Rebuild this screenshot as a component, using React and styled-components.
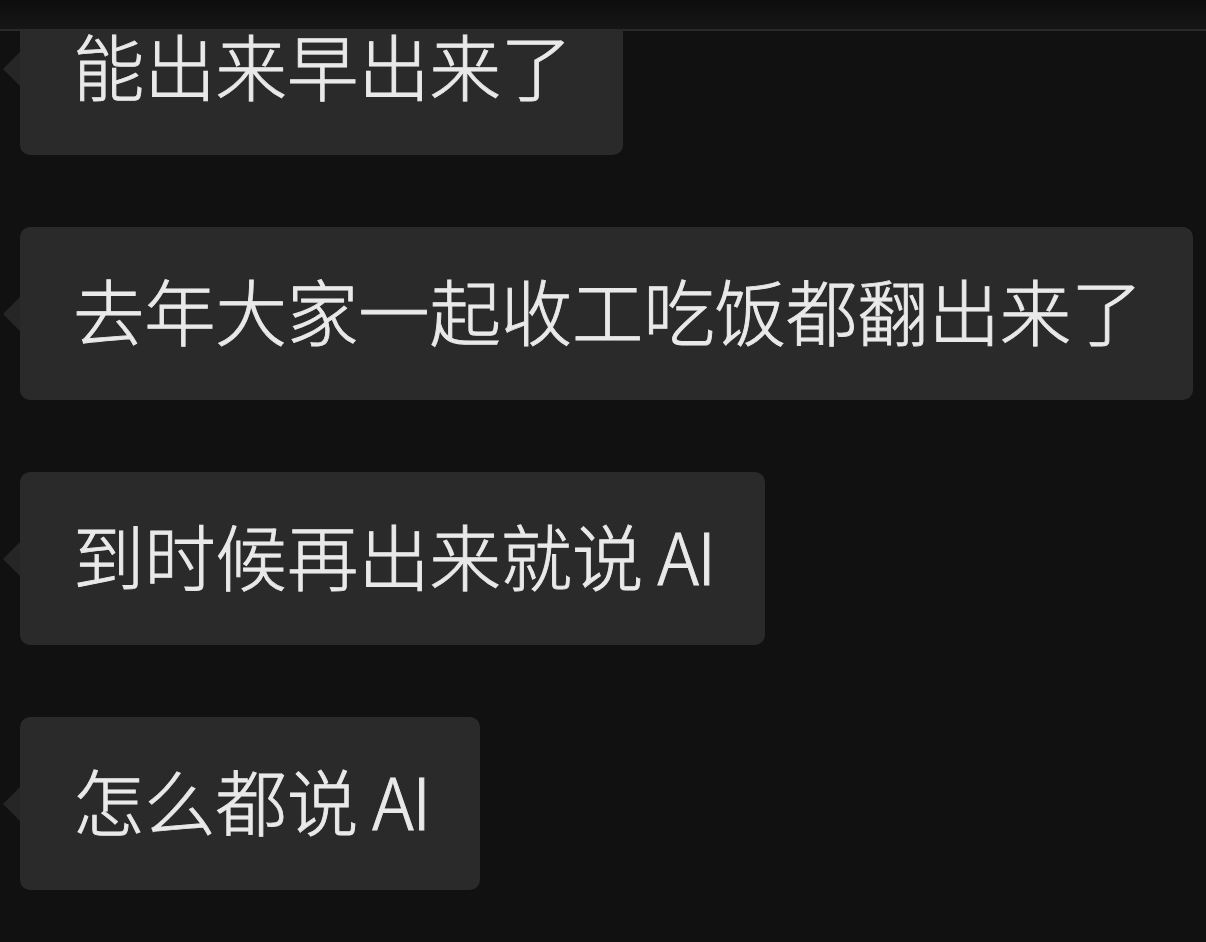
import styled, { createGlobalStyle } from 'styled-components'

const GlobalStyle = createGlobalStyle`
  html, body {
    margin: 0;
    padding: 0;
    background: #111111;
    overflow: hidden;
  }
  body {
    font-family: "Noto Sans CJK SC", "Noto Sans", sans-serif;
  }
`;

const Screen = styled.div`
  position: relative;
  width: 1206px;
  height: 942px;
  overflow: hidden;
  background: #111111;
`;

const TopBar = styled.div`
  position: absolute;
  top: 0;
  left: 0;
  right: 0;
  height: 29px;
  background: linear-gradient(#0d0d0d, #161616);
  border-bottom: 2px solid #2a2a2a;
  z-index: 2;
`;

const ChatList = styled.div`
  display: flex;
  flex-direction: column;
  align-items: flex-start;
  gap: 72px;
  margin-top: -18px;
  padding-left: 20px;
`;

const Bubble = styled.div`
  position: relative;
  display: flex;
  align-items: center;
  height: 173px;
  padding: 0 51px 7px 53px;
  box-sizing: border-box;
  background: #2a2a2a;
  border-radius: 10px;
  color: #e9e9e9;
  font-size: 71.3px;
  font-weight: 300;
  -webkit-text-stroke: 0.9px #e9e9e9;
  line-height: 1;
  white-space: nowrap;

  &::before {
    content: "";
    position: absolute;
    left: -17px;
    top: 50%;
    transform: translateY(-50%);
    border-style: solid;
    border-width: 17px 17px 17px 0;
    border-color: transparent #262626 transparent transparent;
  }
`;

const Latin = styled.span`
  letter-spacing: -2px;
`;

const messages = [
  { zh: '能出来早出来了' },
  { zh: '去年大家一起收工吃饭都翻出来了' },
  { zh: '到时候再出来就说', en: 'AI' },
  { zh: '怎么都说', en: 'AI' },
];

function App() {
  return (
    <Screen>
      <GlobalStyle />
      <TopBar />
      <ChatList>
        {messages.map((m) => (
          <Bubble key={m.zh}>
            {m.zh}
            {m.en && <Latin>&nbsp;{m.en}</Latin>}
          </Bubble>
        ))}
      </ChatList>
    </Screen>
  );
}

export default App;
